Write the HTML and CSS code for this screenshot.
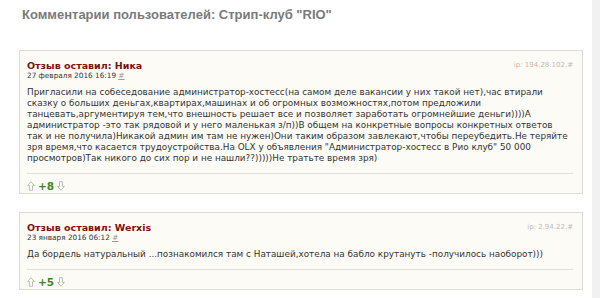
FILE: index.html
```html
<!DOCTYPE html>
<html lang="ru">
<head>
    <meta charset="UTF-8">
    <title>Комментарии пользователей</title>
    <link rel="stylesheet" href="styles.css">
</head>
<body>
    <div class="page">
        <div class="main">
            <h1>Комментарии пользователей: Стрип-клуб "RIO"</h1>

            <div class="review">
                <div class="review-head">
                    <span class="author">Отзыв оставил: Ника</span>
                    <span class="ip">ip: 194.28.102.<a href="#">#</a></span>
                </div>
                <div class="date">27 февраля 2016 16:19 <a href="#">#</a></div>
                <p class="text">Пригласили на собеседование администратор-хостесс(на самом деле вакансии у них такой нет),час втирали<br>сказку о больших деньгах,квартирах,машинах и об огромных возможностях,потом предложили<br>танцевать,аргументируя тем,что внешность решает все и позволяет заработать огромнейшие деньги))))А<br>администратор -это так рядовой и у него маленькая з/п))В общем на конкретные вопросы конкретных ответов<br>так и не получила)Никакой админ им там не нужен)Они таким образом завлекают,чтобы переубедить.Не теряйте<br>зря время,что касается трудоустройства.На OLX у объявления "Администратор-хостесс в Рио клуб" 50 000<br>просмотров)Так никого до сих пор и не нашли??)))))Не тратьте время зря)</p>
                <div class="votes">
                    <svg class="arrow" width="8" height="10" viewBox="0 0 8 10"><path d="M4 0.7 L7.4 4.6 L5.5 4.6 L5.5 9.3 L2.5 9.3 L2.5 4.6 L0.6 4.6 Z"/></svg>
                    <span class="score">+8</span>
                    <svg class="arrow" width="8" height="10" viewBox="0 0 8 10"><path d="M4 9.3 L7.4 5.4 L5.5 5.4 L5.5 0.7 L2.5 0.7 L2.5 5.4 L0.6 5.4 Z"/></svg>
                </div>
            </div>

            <div class="review">
                <div class="review-head">
                    <span class="author">Отзыв оставил: Werxis</span>
                    <span class="ip">ip: 2.94.22.<a href="#">#</a></span>
                </div>
                <div class="date">23 января 2016 06:12 <a href="#">#</a></div>
                <p class="text">Да бордель натуральный ...познакомился там с Наташей,хотела на бабло крутануть -получилось наоборот)))</p>
                <div class="votes">
                    <svg class="arrow" width="8" height="10" viewBox="0 0 8 10"><path d="M4 0.7 L7.4 4.6 L5.5 4.6 L5.5 9.3 L2.5 9.3 L2.5 4.6 L0.6 4.6 Z"/></svg>
                    <span class="score">+5</span>
                    <svg class="arrow" width="8" height="10" viewBox="0 0 8 10"><path d="M4 9.3 L7.4 5.4 L5.5 5.4 L5.5 0.7 L2.5 0.7 L2.5 5.4 L0.6 5.4 Z"/></svg>
                </div>
            </div>
        </div>
        <div class="sidebar"></div>
    </div>
</body>
</html>
```

FILE: styles.css
```css
body {
    margin: 0;
    background-color: #fff;
    font-family: "DejaVu Sans", Verdana, sans-serif;
    color: #333;
}
.page {
    display: flex;
    min-height: 298px;
}
.main {
    flex: 1;
    padding: 6px 9px 0 19px;
}
.sidebar {
    width: 8px;
    background-color: #f1f1f1; /* grey strip at the right edge */
}
h1 {
    margin: 0 0 27px 3px;
    font-family: "Liberation Sans", Arial, sans-serif;
    font-size: 13px;
    line-height: 17px;
    color: #7a7a7a;
}
.review {
    background-color: #fdfbf6;
    border: 1px solid #dedbd3;
    padding: 8px 9px 1px 7px;
    margin-bottom: 18px;
}
.review-head {
    display: flex;
    justify-content: space-between;
    align-items: center;
    height: 12px;
}
.author {
    font-size: 9.5px;
    font-weight: bold;
    color: #7d1010; /* dark red author line */
}
.ip {
    font-size: 7px;
    color: #bdbab2;
}
.ip a {
    color: #bdbab2;
    text-decoration: none;
}
.date {
    font-size: 7.3px;
    line-height: 10px;
    color: #333;
}
.date a {
    color: #999;
}
.text {
    margin: 5.5px 0 0;
    font-size: 8.85px;
    line-height: 11px;
    white-space: nowrap; /* lines are broken by hand */
    color: #333;
}
.votes {
    display: flex;
    align-items: center;
    gap: 3px;
    border-top: 1px solid #e2dfd8;
    margin-top: 9.5px;
    padding-top: 5px;
    height: 13px;
}
.arrow path {
    fill: none;
    stroke: #b5b5b5;
    stroke-width: 0.9;
}
.score {
    font-size: 10.5px;
    font-weight: bold;
    color: #3b8a1c; /* green rating */
}
```
